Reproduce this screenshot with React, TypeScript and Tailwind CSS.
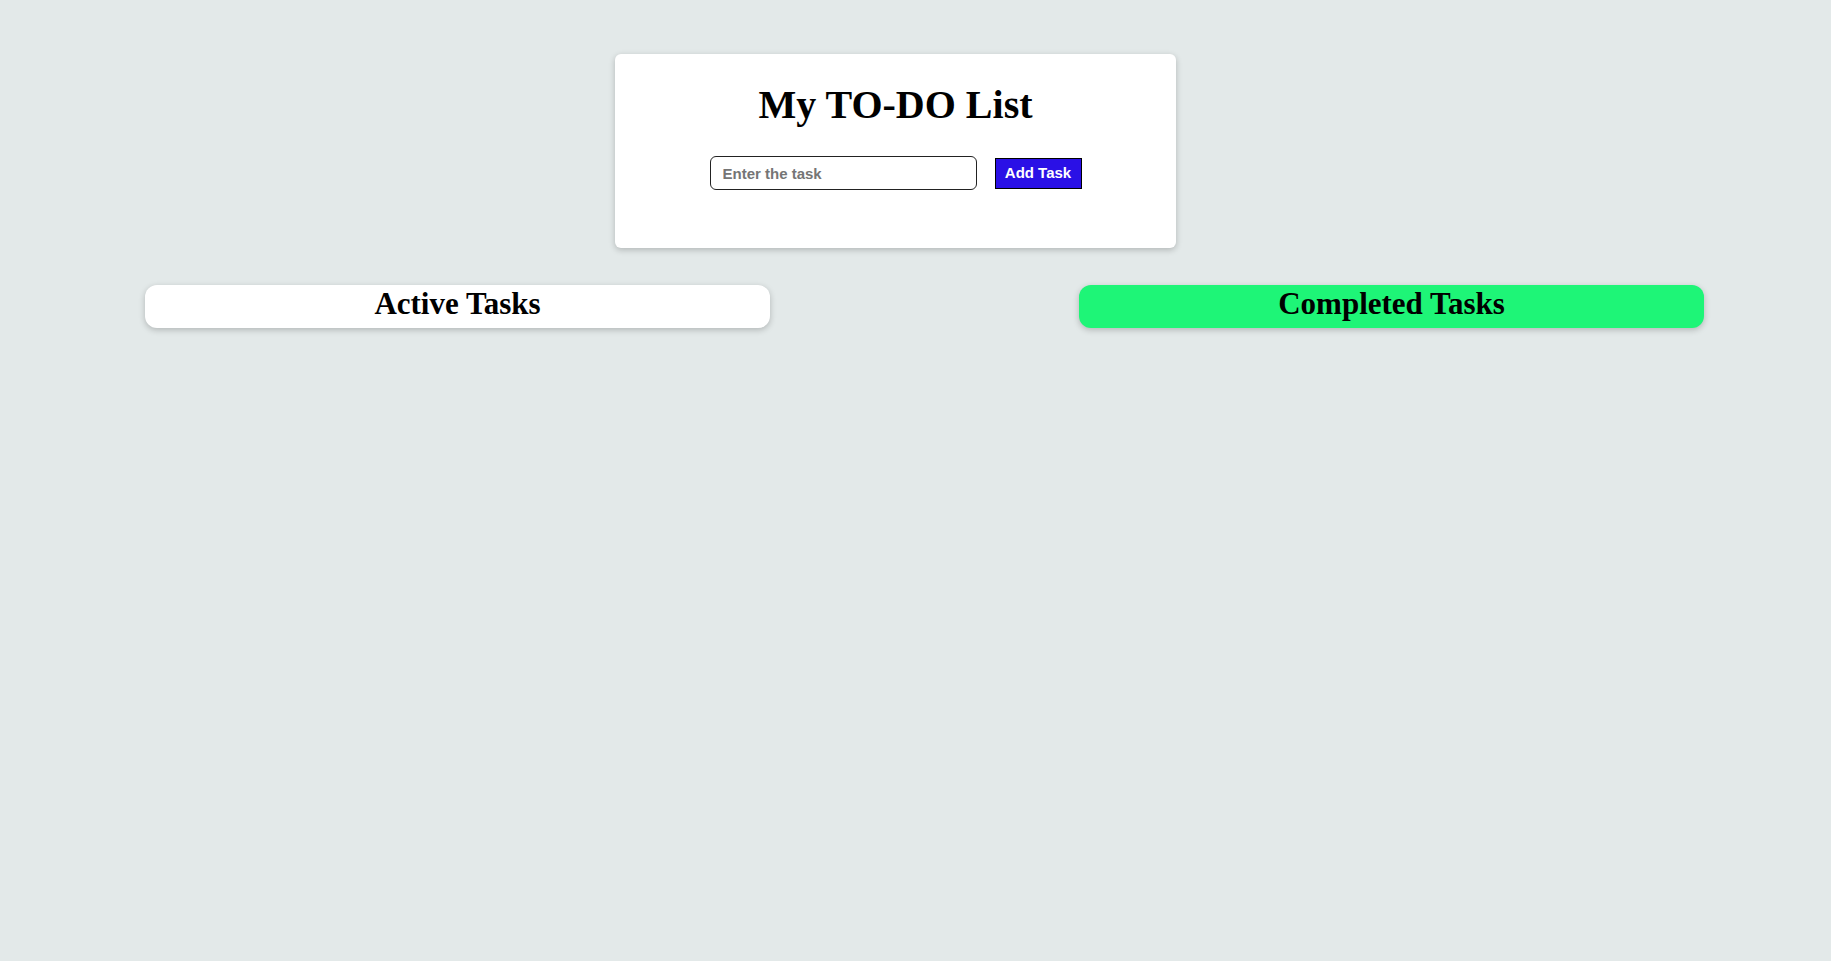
import { useState } from "react";

export default function App() {
  const [task, setTask] = useState("");
  const [active, setActive] = useState<string[]>([]);
  const [completed, setCompleted] = useState<string[]>([]);

  const handleAdd = () => {
    if (!task.trim()) return;
    setActive((prev) => [...prev, task.trim()]);
    setTask("");
  };

  const handleDone = (i: number) => {
    setCompleted((prev) => [...prev, active[i]]);
    setActive((prev) => prev.filter((_, idx) => idx !== i));
  };

  return (
    <div className="min-h-[961px] w-full bg-[#e3e9e9] font-['Liberation_Serif',serif] text-black">
      {/* Header card */}
      <div className="flex justify-center pr-[40px] pt-[54px]">
        <div className="w-[561px] h-[194px] bg-white rounded-[6px] shadow-[0_2px_6px_rgba(0,0,0,0.22)] flex flex-col items-center pt-[29px]">
          <h1 className="text-[40px] leading-[44px] font-bold">My TO-DO List</h1>
          <div className="flex items-center gap-[18px] mt-[29px]">
            <input
              value={task}
              onChange={(e) => setTask(e.target.value)}
              placeholder="Enter the task"
              className="w-[267px] h-[34px] px-[12px] border border-[#222] rounded-[6px] bg-white text-[15px] font-bold font-['Liberation_Sans',Arial,sans-serif] placeholder:text-[#757575] outline-none"
            />
            <button
              type="button"
              onClick={handleAdd}
              className="w-[87px] h-[31px] bg-[#2a10e6] border border-black text-white text-[15px] font-bold font-['Liberation_Sans',Arial,sans-serif]"
            >
              Add Task
            </button>
          </div>
        </div>
      </div>

      {/* Task columns */}
      <div className="flex justify-center pl-[18px] gap-[309px] mt-[37px]">
        <div className="w-[625px] flex flex-col">
          <h2 className="h-[43px] flex items-center justify-center pb-[6px] bg-white rounded-[12px] shadow-[0_2px_6px_rgba(0,0,0,0.22)] text-[31px] leading-[34px] font-bold">
            Active Tasks
          </h2>
          {active.map((t, i) => (
            <div
              key={i}
              onClick={() => handleDone(i)}
              className="mt-2 bg-white rounded-md px-3 py-2 text-lg cursor-pointer"
            >
              {t}
            </div>
          ))}
        </div>
        <div className="w-[625px] flex flex-col">
          <h2 className="h-[43px] flex items-center justify-center pb-[6px] bg-[#1ef577] rounded-[12px] shadow-[0_2px_6px_rgba(0,0,0,0.22)] text-[31px] leading-[34px] font-bold">
            Completed Tasks
          </h2>
          {completed.map((t, i) => (
            <div key={i} className="mt-2 bg-[#1ef577] rounded-md px-3 py-2 text-lg">
              {t}
            </div>
          ))}
        </div>
      </div>
    </div>
  );
}
